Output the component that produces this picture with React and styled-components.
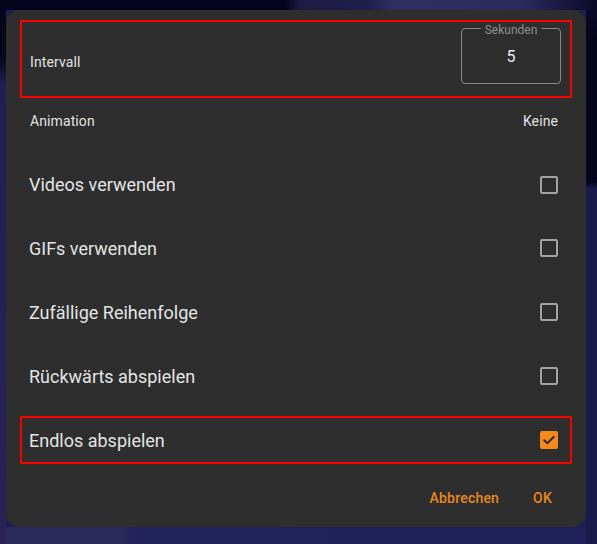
import React, { useState } from "react";
import styled, { createGlobalStyle } from "styled-components";

const Global = createGlobalStyle`
  html, body { margin: 0; padding: 0; }
  body { font-family: Roboto, "Noto Sans", "Liberation Sans", sans-serif; }
  * { box-sizing: border-box; }
`;

const Page = styled.div`
  width: 597px;
  height: 544px;
  overflow: hidden;
  display: flex;
  align-items: flex-start;
  background:
    linear-gradient(to right, #04041c 0, #04041c 285px, #1c1c46 300px, #1f1f4c 370px, #2e2e60 392px, #2c2c5e 520px, #1a1a44 560px, #0a0a26 597px) top / 100% 10px no-repeat,
    linear-gradient(to bottom, #0c0c2c 0, #04041c 40px, #04041c 182px, #1a1a4c 188px) right top / 11px 100% no-repeat,
    linear-gradient(to bottom, #04041c 0, #06061e 55px, #231e52 85px, #2a2456 100%) left top / 6px 100% no-repeat,
    linear-gradient(to right, #2c2a5c 0, #2c2a5c 118px, #22225a 136px, #20205a 100%) bottom / 100% 17px no-repeat,
    #1f1f52;
`;

const Dialog = styled.div`
  margin: 10px 0 0 6px;
  width: 580px;
  height: 517px;
  background: #2e2e2e;
  border-radius: 14px;
  padding: 10px 14px 11px 14px;
  display: flex;
  flex-direction: column;
  color: #e4e4e4;
`;

const Row = styled.div`
  display: flex;
  align-items: center;
  justify-content: space-between;
  height: ${(p) => p.$height}px;
  border: 2px solid ${(p) => (p.$highlight ? "#ff0000" : "transparent")};
  padding: 0 12px 0 ${(p) => p.$padLeft}px;
  margin-top: ${(p) => p.$gap || 0}px;
`;

const IntervalRow = styled(Row)`
  padding-top: 6px;
  padding-right: 9px;
`;

const SmallText = styled.span`
  font-size: 14px;
  color: #e2e2e2;
  letter-spacing: 0.1px;
`;

const Label = styled.span`
  font-size: 18px;
  color: #e4e4e4;
`;

const Field = styled.div`
  position: relative;
  width: 100px;
  height: 56px;
  border: 1px solid #8a8a8a;
  border-radius: 4px;
  display: flex;
  align-items: center;
  justify-content: center;
  align-self: flex-start;
`;

const FieldLabel = styled.span`
  position: absolute;
  top: -6px;
  left: 50%;
  transform: translateX(-50%);
  padding: 0 4px;
  background: #2e2e2e;
  font-size: 12px;
  line-height: 14px;
  color: #8e8e8e;
  white-space: nowrap;
`;

const FieldValue = styled.span`
  font-size: 16px;
  color: #ececec;
  margin-top: 1px;
`;

const Box = styled.span`
  width: 18px;
  height: 18px;
  border-radius: 2px;
  border: 2px solid ${(p) => (p.$checked ? "#f5891b" : "#a2a2a2")};
  background: ${(p) => (p.$checked ? "#f5891b" : "transparent")};
  display: flex;
  align-items: center;
  justify-content: center;
  cursor: pointer;
`;

const Actions = styled.div`
  display: flex;
  justify-content: flex-end;
  gap: 18px;
  margin-top: 16px;
  padding-right: 12px;
`;

const TextButton = styled.button`
  background: none;
  border: none;
  height: 36px;
  padding: 0 8px;
  font-family: inherit;
  font-size: 14px;
  font-weight: 500;
  color: #e8871e;
  letter-spacing: 0.2px;
  cursor: pointer;
`;

function Checkbox({ checked, onToggle }) {
  return (
    <Box role="checkbox" aria-checked={checked} $checked={checked} onClick={onToggle}>
      {checked && (
        <svg width="14" height="14" viewBox="0 0 14 14">
          <path d="M2.2 7.2 L5.4 10.3 L11.8 3.8" fill="none" stroke="#2e2e2e" strokeWidth="2" strokeLinecap="round" strokeLinejoin="round" />
        </svg>
      )}
    </Box>
  );
}

const options = [
  { key: "videos", label: "Videos verwenden" },
  { key: "gifs", label: "GIFs verwenden" },
  { key: "random", label: "Zufällige Reihenfolge" },
  { key: "reverse", label: "Rückwärts abspielen" },
  { key: "loop", label: "Endlos abspielen", highlight: true },
];

export default function App() {
  const [state, setState] = useState({ videos: false, gifs: false, random: false, reverse: false, loop: true });
  return (
    <>
      <Global />
      <Page>
        <Dialog>
          <IntervalRow $height={78} $highlight $padLeft={8}>
            <SmallText>Intervall</SmallText>
            <Field>
              <FieldLabel>Sekunden</FieldLabel>
              <FieldValue>5</FieldValue>
            </Field>
          </IntervalRow>
          <Row $height={47} $padLeft={8}>
            <SmallText>Animation</SmallText>
            <SmallText>Keine</SmallText>
          </Row>
          {options.map((o) => (
            <Row key={o.key} $height={48} $gap={16} $padLeft={7} $highlight={o.highlight}>
              <Label>{o.label}</Label>
              <Checkbox
                checked={state[o.key]}
                onToggle={() => setState((s) => ({ ...s, [o.key]: !s[o.key] }))}
              />
            </Row>
          ))}
          <Actions>
            <TextButton>Abbrechen</TextButton>
            <TextButton>OK</TextButton>
          </Actions>
        </Dialog>
      </Page>
    </>
  );
}
